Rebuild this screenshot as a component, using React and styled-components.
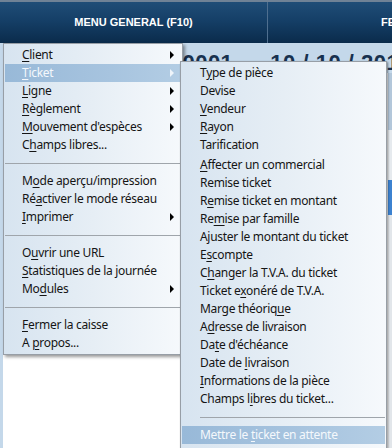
import React from "react";
import styled, { createGlobalStyle } from "styled-components";

const GlobalStyle = createGlobalStyle`
  html, body {
    margin: 0;
    padding: 0;
    overflow: hidden;
    background: #ffffff;
  }
`;

const mainItems = [
  { label: "Client", key: 0, sub: true },
  { label: "Ticket", key: 0, sub: true, active: true },
  { label: "Ligne", key: 0, sub: true },
  { label: "Règlement", key: 0, sub: true },
  { label: "Mouvement d'espèces", key: 0, sub: true },
  { label: "Champs libres...", key: 1 },
  "sep",
  { label: "Mode aperçu/impression", key: 1 },
  { label: "Réactiver le mode réseau", key: 2 },
  { label: "Imprimer", key: 0, sub: true },
  "sep",
  { label: "Ouvrir une URL", key: 1 },
  { label: "Statistiques de la journée", key: 0 },
  { label: "Modules", key: 2, sub: true },
  "sep",
  { label: "Fermer la caisse", key: 0 },
  { label: "A propos...", key: 2 },
];

const ticketItems = [
  { label: "Type de pièce", key: 1 },
  { label: "Devise" },
  { label: "Vendeur", key: 0 },
  { label: "Rayon", key: 0 },
  { label: "Tarification" },
  "gap",
  { label: "Affecter un commercial", key: 0 },
  { label: "Remise ticket" },
  { label: "Remise ticket en montant", key: 1 },
  { label: "Remise par famille", key: 2 },
  { label: "Ajuster le montant du ticket" },
  { label: "Escompte", key: 1 },
  { label: "Changer la T.V.A. du ticket", key: 1 },
  { label: "Ticket exonéré de T.V.A.", key: 8 },
  { label: "Marge théorique", key: 13 },
  { label: "Adresse de livraison", key: 1 },
  { label: "Date d'échéance", key: 2 },
  { label: "Date de livraison", key: 8 },
  { label: "Informations de la pièce", key: 0 },
  { label: "Champs libres du ticket...", key: 8 },
  "sep",
  { label: "Mettre le ticket en attente", key: 10, active: true },
];

function Label({ text, at }) {
  if (at === undefined) return <span>{text}</span>;
  return (
    <span>
      {text.slice(0, at)}
      <u>{text[at]}</u>
      {text.slice(at + 1)}
    </span>
  );
}

function MenuList({ items }) {
  return items.map((item, i) => {
    if (item === "sep") return <Separator key={i} />;
    if (item === "gap") return <Spacer key={i} />;
    return (
      <Item key={i} $active={item.active}>
        <Label text={item.label} at={item.key} />
        {item.sub && <Arrow $active={item.active} />}
      </Item>
    );
  });
}

export default function App() {
  return (
    <Screen>
      <GlobalStyle />
      <TopBar>
        <BarCell $first>MENU GENERAL (F10)</BarCell>
        <BarCell>FERMER LA CAISSE (F12)</BarCell>
      </TopBar>
      <Workspace>
        <TicketHeader>
          <BigText>T000001</BigText>
          <BigText>10 / 10 / 2013</BigText>
        </TicketHeader>
        <Body>
          <LinesPanel />
          <SideStrip>
            <SideBlock $h={57} $c="#b3c7da" />
            <SideBlock $h={50} $c="#e6eaee" />
            <SideBlock $h={35} $c="#3c82d0" />
            <SideBlock $h={240} $c="#e2e6ea" />
          </SideStrip>
        </Body>
      </Workspace>

      <MainMenu>
        <MenuList items={mainItems} />
      </MainMenu>
      <SubMenu>
        <MenuList items={ticketItems} />
      </SubMenu>
    </Screen>
  );
}

const Screen = styled.div`
  position: relative;
  width: 392px;
  height: 448px;
  overflow: hidden;
  display: flex;
  flex-direction: column;
  font-family: "Noto Sans", "Open Sans", sans-serif;
`;

const TopBar = styled.div`
  height: 43px;
  flex-shrink: 0;
  display: flex;
  box-sizing: border-box;
  border-top: 2px solid #6f8296;
  background: linear-gradient(#1f4d77 0%, #153f67 45%, #0a2b4b 100%);
`;

const BarCell = styled.div`
  flex: ${(p) => (p.$first ? "0 0 268px" : "1 0 auto")};
  display: flex;
  align-items: center;
  justify-content: ${(p) => (p.$first ? "center" : "flex-start")};
  padding-left: ${(p) => (p.$first ? "0" : "113px")};
  padding-bottom: 2px;
  box-sizing: border-box;
  border-right: ${(p) => (p.$first ? "1px solid #4f6f8f" : "none")};
  color: #ffffff;
  font-family: "Liberation Sans", Arial, sans-serif;
  font-weight: bold;
  font-size: 11px;
  white-space: nowrap;
`;

const Workspace = styled.div`
  flex: 1;
  display: flex;
  flex-direction: column;
  background: #c4d8ea;
  padding-left: 3px;
`;

const TicketHeader = styled.div`
  height: 30px;
  flex-shrink: 0;
  display: flex;
  gap: 37px;
  padding: 7px 0 0 140px;
  box-sizing: border-box;
  white-space: nowrap;
`;

const BigText = styled.span`
  font-family: "Liberation Sans", Arial, sans-serif;
  font-weight: bold;
  font-size: 22px;
  line-height: 26px;
  letter-spacing: 0.5px;
  color: #17314f;
`;

const Body = styled.div`
  flex: 1;
  display: flex;
`;

const LinesPanel = styled.div`
  flex: 1;
  background: #ffffff;
`;

const SideStrip = styled.div`
  width: 4px;
  display: flex;
  flex-direction: column;
`;

const SideBlock = styled.div`
  height: ${(p) => p.$h}px;
  flex-shrink: 0;
  background: ${(p) => p.$c};
`;

const MenuBox = styled.div`
  position: absolute;
  box-sizing: border-box;
  border: 1px solid #979ea6;
  background: linear-gradient(90deg, #d7e4f0 0%, #e6eef5 50%, #f6f9fc 100%);
  box-shadow: 2px 2px 3px rgba(0, 0, 0, 0.4);
  font-size: 12px;
  letter-spacing: -0.3px;
  color: #151515;
`;

const MainMenu = styled(MenuBox)`
  left: 3px;
  top: 43px;
  width: 180px;
  padding: 2px 1px 2px 1px;
  z-index: 1;
`;

const SubMenu = styled(MenuBox)`
  left: 180px;
  top: 61px;
  width: 207px;
  height: 400px;
  padding: 2px 1px;
  z-index: 2;
  box-shadow: 1px 1px 2px rgba(0, 0, 0, 0.45);

  & > div {
    padding-left: 18px;
  }
`;

const Item = styled.div`
  height: 18px;
  display: flex;
  align-items: center;
  justify-content: space-between;
  padding: 0 7px 0 17px;
  white-space: nowrap;
  line-height: 18px;
  color: ${(p) => (p.$active ? "#f4f8fc" : "#151515")};
  background: ${(p) =>
    p.$active
      ? "linear-gradient(90deg, #98b9d8 0%, #a7c4df 60%, #b3cde4 100%)"
      : "transparent"};

  u {
    text-underline-offset: 2px;
  }
`;

const Arrow = styled.span`
  width: 0;
  height: 0;
  border-top: 4px solid transparent;
  border-bottom: 4px solid transparent;
  border-left: 4px solid ${(p) => (p.$active ? "#eef4fa" : "#000000")};
`;

const Separator = styled.div`
  height: 18px;
  display: flex;
  align-items: center;

  &::before {
    content: "";
    flex: 1;
    border-top: 1px solid #9fa5ab;
  }
`;

const Spacer = styled.div`
  height: 2px;
`;
